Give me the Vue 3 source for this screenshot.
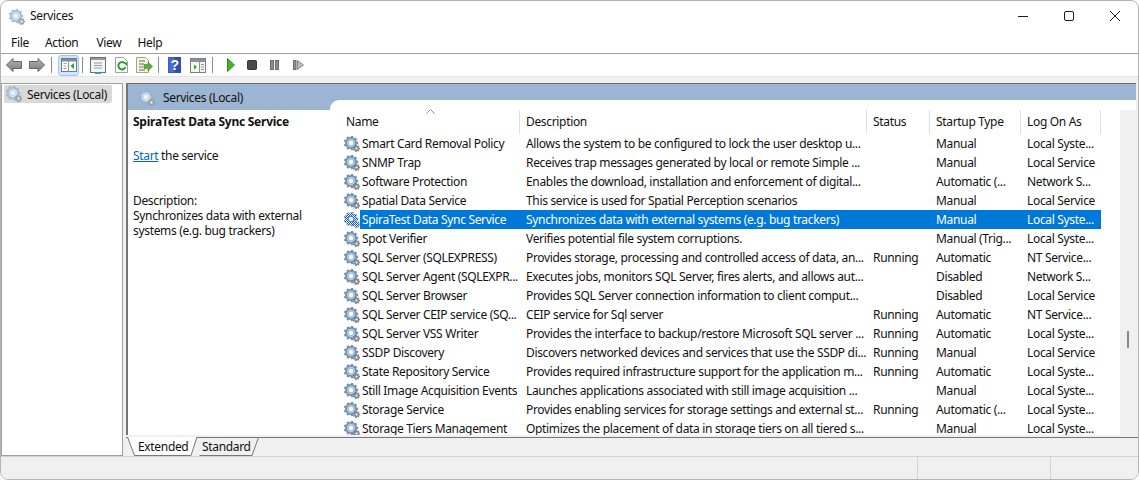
<template>
  <div class="window">
    <svg class="defs" width="0" height="0">
      <defs>
        <pattern id="dither" width="2" height="2" patternUnits="userSpaceOnUse">
          <rect width="2" height="2" fill="#fff" />
          <rect width="1" height="1" fill="#0a5fc4" />
          <rect x="1" y="1" width="1" height="1" fill="#0a5fc4" />
        </pattern>
        <linearGradient id="arrow" x1="0" y1="0" x2="0" y2="1">
          <stop offset="0" stop-color="#b4b4b4" />
          <stop offset="1" stop-color="#7c7c7c" />
        </linearGradient>
        <symbol id="gear" viewBox="0 0 16 16">
          <path :d="bigGear" fill="#7396bb" stroke="#5f7387" stroke-width=".5" />
          <circle cx="7" cy="7" r="3.9" fill="#cfdeec" />
          <circle cx="7" cy="7" r="2.9" fill="#fff" stroke="#7f9dbd" stroke-width=".8" />
          <path :d="smallGear" fill="#858e97" stroke="#5f666d" stroke-width=".4" />
          <circle cx="12.5" cy="12.5" r="1" fill="#fff" />
        </symbol>
        <symbol id="gear-pale" viewBox="0 0 16 16">
          <path :d="bigGear" fill="#a9c3dd" stroke="#8aa3bc" stroke-width=".5" />
          <circle cx="7" cy="7" r="3.7" fill="#fff" />
          <circle cx="7" cy="7" r="2.9" fill="#eef4fa" stroke="#a9c3dd" stroke-width=".8" />
          <path :d="smallGear" fill="#a7adb3" stroke="#80878e" stroke-width=".4" />
          <circle cx="12.5" cy="12.5" r="1" fill="#fff" />
        </symbol>
        <symbol id="gear-sel" viewBox="0 0 16 16">
          <path :d="bigGear" fill="url(#dither)" stroke="#1c4f8f" stroke-width=".5" />
          <circle cx="7" cy="7" r="2.8" fill="#fff" stroke="#0a5fc4" stroke-width=".8" />
          <path :d="smallGear" fill="url(#dither)" stroke="#47628a" stroke-width=".4" />
        </symbol>
      </defs>
    </svg>

    <header class="titlebar">
      <svg class="app-icon" width="16" height="16"><use href="#gear-pale" /></svg>
      <span class="title">Services</span>
      <div class="caption">
        <svg width="46" height="30" viewBox="0 0 46 30"><path d="M18 15.500h10" stroke="#1a1a1a" fill="none" /></svg>
        <svg width="46" height="30" viewBox="0 0 46 30"><rect x="18.5" y="10.5" width="9" height="9" rx="1.5" stroke="#1a1a1a" fill="none" /></svg>
        <svg width="46" height="30" viewBox="0 0 46 30"><path d="M18 10l10 10M28 10l-10 10" stroke="#1a1a1a" fill="none" /></svg>
      </div>
    </header>

    <nav class="menubar">
      <span v-for="m in menus" :key="m">{{ m }}</span>
    </nav>

    <div class="toolbar">
      <svg width="16" height="14" viewBox="0 0 16 14"><path d="M.5 7L7 .5V3.500h8.500v7H7v3z" fill="url(#arrow)" stroke="#666" /></svg>
      <svg class="m7" width="16" height="14" viewBox="0 0 16 14"><path d="M15.500 7L9 .5V3.500H.5v7H9v3z" fill="url(#arrow)" stroke="#666" /></svg>
      <i class="sep m6"></i>
      <span class="tool-active m6">
        <svg width="16" height="14" viewBox="0 0 16 14">
          <rect x=".5" y=".5" width="15" height="13" fill="#fff" stroke="#6f7b86" />
          <rect x="1" y="1" width="14" height="2.5" fill="#7f8c99" />
          <path d="M7.500 3.500v10" stroke="#8a949e" />
          <path d="M2.500 5.500h3M2.500 8h3M2.500 10.500h3" stroke="#9aa3ab" />
          <path d="M13 5v6L9.500 8z" fill="#2aa52a" />
        </svg>
      </span>
      <i class="sep m3"></i>
      <svg class="m7" width="16" height="17" viewBox="0 0 16 17">
        <rect x=".5" y=".5" width="15" height="15" fill="#f4f4f4" stroke="#6f6f6f" />
        <rect x="1" y="1" width="14" height="2" fill="#9b9b9b" />
        <path d="M4 6h8M4 8.500h8M4 11h8" stroke="#8c9eb5" />
        <path d="M5 15.500h6v1.500H5z" fill="#32a6e8" />
      </svg>
      <svg class="m9" width="13" height="16" viewBox="0 0 13 16">
        <path d="M.5.5h8l4 4v11H.5z" fill="#fff" stroke="#a0a0a0" />
        <path d="M10 6.500a3.700 3.700 0 1 0 .5 3.500" fill="none" stroke="#2f9e35" stroke-width="2" />
        <path d="M8 5.500h4v3.500z" fill="#2f9e35" />
      </svg>
      <svg class="m8" width="17" height="16" viewBox="0 0 17 16">
        <path d="M.5.5h9l3 3v12H.5z" fill="#fbf6dc" stroke="#a8a27f" />
        <path d="M3 4h6M3 7h5M3 10h4M3 13h6" stroke="#5a6a7a" />
        <path d="M8 7.500h4V5l4.500 4.500L12 14v-2.500H8z" fill="#55b33c" stroke="#3c8c2a" stroke-width=".6" />
      </svg>
      <i class="sep m5"></i>
      <svg class="m9" width="13" height="16" viewBox="0 0 13 16">
        <rect width="13" height="16" fill="#2f4fb0" />
        <rect x=".5" y=".5" width="6" height="15" fill="#4a6cd0" />
        <text x="6.500" y="13" class="help-mark">?</text>
      </svg>
      <svg class="m9" width="16" height="15" viewBox="0 0 16 15">
        <rect x=".5" y=".5" width="15" height="14" fill="#f3f5ee" stroke="#7b7f84" />
        <rect x="1" y="1" width="14" height="3" fill="#8b9199" />
        <path d="M9.500 4v10" stroke="#8b9199" />
        <path d="M11 6.500h3M11 9h3M11 11.500h3" stroke="#8b9199" />
        <path d="M4 6.500l3 2.500-3 2.500z" fill="#2aa52a" />
      </svg>
      <i class="sep m6"></i>
      <svg class="m14" width="8" height="14" viewBox="0 0 8 14"><path d="M.5 .5L7.500 7 .5 13.500z" fill="#44b52b" stroke="#2f8f1c" /></svg>
      <svg class="m12" width="10" height="10" viewBox="0 0 10 10"><rect x=".5" y=".5" width="9" height="9" rx="1" fill="#4a4a4a" stroke="#333" /></svg>
      <svg class="m13" width="9" height="10" viewBox="0 0 9 10"><rect x=".5" y=".5" width="3" height="9" fill="#8e8e8e" stroke="#6d6d6d" /><rect x="5.500" y=".5" width="3" height="9" fill="#8e8e8e" stroke="#6d6d6d" /></svg>
      <svg class="m14" width="11" height="10" viewBox="0 0 11 10"><rect x=".5" y=".5" width="2.500" height="9" fill="#8e8e8e" stroke="#6d6d6d" /><path d="M4.500 .5l6 4.500-6 4.500z" fill="#bdbdbd" stroke="#8a8a8a" /></svg>
    </div>

    <main class="main">
      <aside class="tree">
        <div class="tree-item">
          <svg width="16" height="16"><use href="#gear-pale" /></svg>
          <span>Services (Local)</span>
        </div>
      </aside>

      <div class="right">
        <section class="pane">
          <div class="pane-head">
            <svg width="16" height="16"><use href="#gear-pale" /></svg>
            <span>Services (Local)</span>
          </div>
          <div class="pane-body">
            <div class="details">
              <h3>SpiraTest Data Sync Service</h3>
              <p class="start"><a>Start</a> the service</p>
              <p class="desc">Description:<br />Synchronizes data with external<br />systems (e.g. bug trackers)</p>
            </div>
            <div class="list">
              <div class="table">
                <div class="thead">
                  <div
                    v-for="c in columns"
                    :key="c.label"
                    class="th"
                    :style="{ width: c.width + 'px', paddingLeft: c.pad + 'px' }"
                  >{{ c.label }}</div>
                  <svg class="sort" width="9" height="5" viewBox="0 0 9 5"><path d="M.5 4.500l4-4 4 4" fill="none" stroke="#8a8a8a" /></svg>
                </div>
                <div class="tbody">
                  <div v-for="r in rows" :key="r[0]" class="row" :class="{ selected: r[0] === selected }">
                    <svg class="row-icon" width="16" height="16"><use :href="r[0] === selected ? '#gear-sel' : '#gear'" /></svg>
                    <div class="cells">
                      <span class="c-name">{{ r[0] }}</span>
                      <span class="c-desc">{{ r[1] }}</span>
                      <span class="c-status">{{ r[2] }}</span>
                      <span class="c-start">{{ r[3] }}</span>
                      <span class="c-log">{{ r[4] }}</span>
                    </div>
                  </div>
                </div>
              </div>
              <div class="scrollbar"><i class="thumb"></i></div>
            </div>
          </div>
        </section>
        <div class="tabs">
          <div class="tab tab-on">
            <svg class="tab-bg" width="70" height="19" viewBox="0 0 70 19"><path d="M.5 0L7.500 18.500H64L70 0" fill="#fff" stroke="#777" /></svg>
            <span>Extended</span>
          </div>
          <div class="tab tab-off">
            <svg class="tab-bg" width="66" height="19" viewBox="0 0 66 19"><path d="M0 10L3.500 .5H65.500L59 18.500H6.500" fill="#f0f0f0" stroke="#777" /></svg>
            <span>Standard</span>
          </div>
        </div>
      </div>
    </main>

    <footer class="status">
      <i></i>
      <i></i>
    </footer>
  </div>
</template>

<script setup>
const gear = (cx, cy, outer, inner, teeth) => {
  const pts = []
  const step = (Math.PI * 2) / teeth
  for (let i = 0; i < teeth; i++) {
    const a = i * step
    const list = [
      [a - step * 0.32, inner],
      [a - step * 0.18, outer],
      [a + step * 0.18, outer],
      [a + step * 0.32, inner]
    ]
    for (const [t, r] of list) {
      pts.push((cx + Math.cos(t) * r).toFixed(2) + ' ' + (cy + Math.sin(t) * r).toFixed(2))
    }
  }
  return 'M' + pts.join('L') + 'Z'
}
const bigGear = gear(7, 7, 6.9, 5.5, 9)
const smallGear = gear(12.5, 12.5, 3.4, 2.4, 7)

const menus = ['File', 'Action', 'View', 'Help']
const selected = 'SpiraTest Data Sync Service'

const columns = [
  { label: 'Name', width: 190, pad: 16 },
  { label: 'Description', width: 347, pad: 6 },
  { label: 'Status', width: 63, pad: 6 },
  { label: 'Startup Type', width: 91, pad: 6 },
  { label: 'Log On As', width: 80, pad: 6 }
]

const rows = [
  ['Smart Card Removal Policy', 'Allows the system to be configured to lock the user desktop u...', '', 'Manual', 'Local Syste...'],
  ['SNMP Trap', 'Receives trap messages generated by local or remote Simple ...', '', 'Manual', 'Local Service'],
  ['Software Protection', 'Enables the download, installation and enforcement of digital...', '', 'Automatic (...', 'Network S...'],
  ['Spatial Data Service', 'This service is used for Spatial Perception scenarios', '', 'Manual', 'Local Service'],
  ['SpiraTest Data Sync Service', 'Synchronizes data with external systems (e.g. bug trackers)', '', 'Manual', 'Local Syste...'],
  ['Spot Verifier', 'Verifies potential file system corruptions.', '', 'Manual (Trig...', 'Local Syste...'],
  ['SQL Server (SQLEXPRESS)', 'Provides storage, processing and controlled access of data, an...', 'Running', 'Automatic', 'NT Service...'],
  ['SQL Server Agent (SQLEXPR...', 'Executes jobs, monitors SQL Server, fires alerts, and allows aut...', '', 'Disabled', 'Network S...'],
  ['SQL Server Browser', 'Provides SQL Server connection information to client comput...', '', 'Disabled', 'Local Service'],
  ['SQL Server CEIP service (SQ...', 'CEIP service for Sql server', 'Running', 'Automatic', 'NT Service...'],
  ['SQL Server VSS Writer', 'Provides the interface to backup/restore Microsoft SQL server ...', 'Running', 'Automatic', 'Local Syste...'],
  ['SSDP Discovery', 'Discovers networked devices and services that use the SSDP di...', 'Running', 'Manual', 'Local Service'],
  ['State Repository Service', 'Provides required infrastructure support for the application m...', 'Running', 'Automatic', 'Local Syste...'],
  ['Still Image Acquisition Events', 'Launches applications associated with still image acquisition ...', '', 'Manual', 'Local Syste...'],
  ['Storage Service', 'Provides enabling services for storage settings and external st...', 'Running', 'Automatic (...', 'Local Syste...'],
  ['Storage Tiers Management', 'Optimizes the placement of data in storage tiers on all tiered s...', '', 'Manual', 'Local Syste...']
]
</script>

<style>
html, body { margin: 0; background: #fff; }
</style>

<style scoped>
.window {
  width: 1139px;
  height: 480px;
  box-sizing: border-box;
  border: 1px solid #b4b4b4;
  border-radius: 8px;
  overflow: hidden;
  display: flex;
  flex-direction: column;
  background: #fff;
  font-family: "Noto Sans", "Open Sans", sans-serif;
  font-size: 12px;
  letter-spacing: -0.33px;
  color: #111;
}
.defs { position: absolute; }
svg { display: block; flex: none; }

.titlebar {
  height: 31px;
  flex: none;
  display: flex;
  align-items: center;
  padding-left: 8px;
}
.title { margin-left: 5px; margin-top: -2px; }
.caption {
  margin-left: auto;
  display: flex;
  margin-top: -2px;
}

.menubar {
  height: 21px;
  flex: none;
  border-bottom: 1px solid #a0a0a0;
  display: flex;
  gap: 16px;
  padding-left: 10px;
  align-items: center;
}
.menubar span:nth-child(3) { margin-left: 2px; }

.toolbar {
  height: 22px;
  flex: none;
  border-bottom: 1px solid #e4e4e4;
  display: flex;
  align-items: center;
  padding-left: 5px;
}
.m3 { margin-left: 3px; }
.m5 { margin-left: 5px; }
.m6 { margin-left: 6px; }
.m7 { margin-left: 7px; }
.m8 { margin-left: 8px; }
.m9 { margin-left: 9px; }
.m12 { margin-left: 12px; }
.m13 { margin-left: 13px; }
.m14 { margin-left: 14px; }
.sep { width: 1px; height: 16px; background: #8c8c8c; flex: none; }
.tool-active {
  width: 21px;
  height: 21px;
  box-sizing: border-box;
  background: #cfe6fb;
  border: 1px solid #9cc9f0;
  border-radius: 3px;
  display: flex;
  align-items: center;
  justify-content: center;
}
.help-mark {
  font-family: "Liberation Sans", sans-serif;
  font-size: 14px;
  font-weight: 700;
  fill: #fff;
  text-anchor: middle;
}

.main {
  flex: 1;
  min-height: 0;
  display: flex;
  background: #f0f0f0;
  padding-top: 6px;
  border-bottom: 1px solid #d4d4d4;
}
.tree {
  width: 122px;
  flex: none;
  box-sizing: border-box;
  background: #fff;
  border: 1px solid #a0a0a0;
  padding: 1px 2px;
}
.tree-item {
  width: 108px;
  height: 18px;
  background: #d9d9d9;
  border-radius: 2px;
  display: flex;
  align-items: center;
  gap: 5px;
  white-space: nowrap;
}
.tree-item svg { margin-left: 2px; }

.right {
  margin-left: 3px;
  flex: 1;
  min-width: 0;
  display: flex;
  flex-direction: column;
}
.pane {
  flex: 1;
  min-height: 0;
  display: flex;
  flex-direction: column;
  box-sizing: border-box;
  background: #fff;
  border-top: 1px solid #6d6d6d;
  border-left: 2px solid #767676;
  margin-right: 2px;
}
.pane-head {
  height: 26px;
  flex: none;
  background: #9bb5d2;
  display: flex;
  align-items: flex-start;
  gap: 8px;
  padding: 6px 0 0 11px;
  box-sizing: border-box;
}
.pane-head span { margin-top: -1px; }
.pane-body {
  flex: 1;
  min-height: 0;
  display: flex;
}
.details {
  width: 202px;
  flex: none;
  box-sizing: border-box;
  padding: 4px 0 0 5px;
}
.details h3 {
  margin: 0;
  font-size: 12px;
  font-weight: 700;
  line-height: 16px;
  letter-spacing: -0.25px;
}
.start { margin: 18px 0 0; line-height: 16px; }
.start a { color: #0066cc; text-decoration: underline; }
.desc { margin: 29px 0 0; line-height: 15px; }

.list {
  flex: 1;
  min-width: 0;
  margin-top: -10px;
  background: #fff;
  border-top-left-radius: 9px;
  display: flex;
  position: relative;
}
.table {
  width: 790px;
  flex: none;
  display: flex;
  flex-direction: column;
  min-height: 0;
  overflow: hidden;
}
.thead {
  flex: none;
  height: 34px;
  padding: 10px 0 0 0;
  box-sizing: border-box;
  display: flex;
  position: relative;
}
.th {
  box-sizing: border-box;
  height: 24px;
  border-right: 1px solid #e0e0e0;
  line-height: 23px;
  white-space: nowrap;
}
.sort { position: absolute; left: 96px; top: 9px; }
.tbody { flex: 1; min-height: 0; overflow: hidden; }
.row {
  height: 19px;
  display: flex;
  align-items: center;
  padding-left: 14px;
  white-space: nowrap;
}
.cells { display: flex; width: 741px; height: 19px; align-items: center; flex: none; }
.cells span { display: block; box-sizing: border-box; flex: none; }
.c-name { width: 160px; padding-left: 2px; }
.c-desc { width: 347px; padding-left: 6px; }
.c-status { width: 63px; padding-left: 6px; }
.c-start { width: 91px; padding-left: 6px; }
.c-log { width: 80px; padding-left: 6px; }
.selected .cells { background: #0078d7; color: #fff; }

.scrollbar {
  flex: 1;
  margin-top: 10px;
  background: #f0f0f0;
  position: relative;
}
.thumb {
  position: absolute;
  left: 7px;
  top: 221px;
  width: 2px;
  height: 17px;
  background: #8a8a8a;
}

.tabs {
  height: 19px;
  margin-top: 2px;
  box-sizing: border-box;
  border-top: 1px solid #777;
  flex: none;
  display: flex;
  padding-left: 1px;
}
.tab {
  position: relative;
  height: 18px;
  line-height: 17px;
}
.tab-on { width: 70px; margin-right: -4px; z-index: 1; }
.tab-off { width: 66px; }
.tab-bg { position: absolute; left: 0; top: -1px; }
.tab span { position: relative; }
.tab-on span { margin-left: 11px; }
.tab-off span { margin-left: 9px; }

.status {
  height: 22px;
  flex: none;
  background: #f0f0f0;
  display: flex;
  padding-left: 916px;
}
.status i { width: 133px; height: 22px; border-left: 1px solid #d4d4d4; flex: none; box-sizing: border-box; }
</style>
